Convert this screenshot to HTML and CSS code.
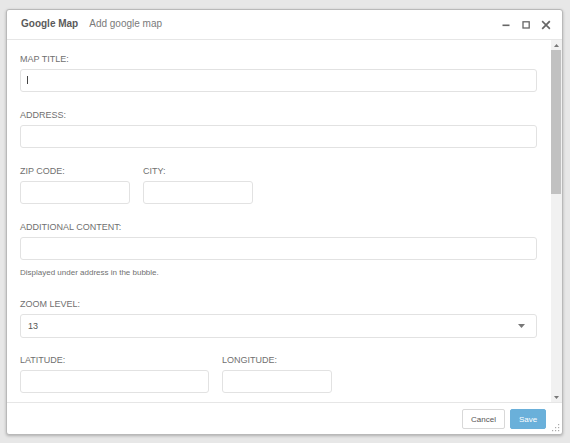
FILE: index.html
```html
<!DOCTYPE html>
<html>
<head>
<meta charset="utf-8">
<link rel="stylesheet" href="styles.css">
</head>
<body>
<div class="dialog">
  <div class="header">
    <div class="title"><span class="title-main">Google Map</span><span class="title-sub">Add google map</span></div>
    <div class="controls">
      <svg class="ctl" viewBox="0 0 10 10" width="10" height="10"><rect x="1.5" y="4.5" width="7" height="1.6" fill="#666"/></svg>
      <svg class="ctl" viewBox="0 0 10 10" width="10" height="10"><rect x="2" y="1.8" width="6.2" height="6.2" fill="none" stroke="#666" stroke-width="1.3"/></svg>
      <svg class="ctl" viewBox="0 0 10 10" width="10" height="10"><path d="M1.8 1.8 L8.2 8.2 M8.2 1.8 L1.8 8.2" stroke="#666" stroke-width="1.7" stroke-linecap="square"/></svg>
    </div>
  </div>
  <div class="body">
    <div class="form">
      <div class="group">
        <div class="label">MAP TITLE:</div>
        <div class="caret-wrap"><input class="input full" type="text"><span class="caret"></span></div>
      </div>
      <div class="group">
        <div class="label">ADDRESS:</div>
        <input class="input full" type="text">
      </div>
      <div class="row">
        <div class="group w110">
          <div class="label">ZIP CODE:</div>
          <input class="input full" type="text">
        </div>
        <div class="group w110">
          <div class="label">CITY:</div>
          <input class="input full" type="text">
        </div>
      </div>
      <div class="group with-help">
        <div class="label">ADDITIONAL CONTENT:</div>
        <input class="input full" type="text">
        <div class="help">Displayed under address in the bubble.</div>
      </div>
      <div class="group zoom">
        <div class="label">ZOOM LEVEL:</div>
        <div class="select"><span>13</span><svg width="7" height="4" viewBox="0 0 7 4"><path d="M0 0 L7 0 L3.5 4 Z" fill="#777"/></svg></div>
      </div>
      <div class="row">
        <div class="group w189">
          <div class="label">LATITUDE:</div>
          <input class="input full" type="text">
        </div>
        <div class="group w110">
          <div class="label">LONGITUDE:</div>
          <input class="input full" type="text">
        </div>
      </div>
    </div>
    <div class="scrollbar">
      <div class="arrow"><svg width="5" height="3" viewBox="0 0 5 3"><path d="M0 3 L5 3 L2.5 0 Z" fill="#777"/></svg></div>
      <div class="thumb"></div>
      <div class="track"></div>
      <div class="arrow"><svg width="5" height="3" viewBox="0 0 5 3"><path d="M0 0 L5 0 L2.5 3 Z" fill="#777"/></svg></div>
    </div>
  </div>
  <div class="footer">
    <button class="btn cancel">Cancel</button>
    <button class="btn save">Save</button>
  </div>
  <svg class="grip" width="8" height="8" viewBox="0 0 8 8">
    <rect x="6" y="0" width="1.2" height="1.2" fill="#aaa"/>
    <rect x="3" y="3" width="1.2" height="1.2" fill="#aaa"/>
    <rect x="6" y="3" width="1.2" height="1.2" fill="#aaa"/>
    <rect x="0" y="6" width="1.2" height="1.2" fill="#aaa"/>
    <rect x="3" y="6" width="1.2" height="1.2" fill="#aaa"/>
    <rect x="6" y="6" width="1.2" height="1.2" fill="#aaa"/>
  </svg>
</div>
</body>
</html>
```
FILE: styles.css
```css
html, body {
  margin: 0;
  padding: 0;
}
body {
  background: #e7e7e7;
  padding: 9px 0 0 6px;
  font-family: "Liberation Sans", Arial, sans-serif;
  height: 443px;
  box-sizing: border-box;
  overflow: hidden;
}
.dialog {
  position: relative;
  width: 557px;
  height: 426px;
  box-sizing: border-box;
  border: 1px solid #b9b9b9;
  border-radius: 3px;
  background: #fff;
  box-shadow: 0 1px 3px rgba(0,0,0,0.25);
  display: flex;
  flex-direction: column;
}
.header {
  height: 28px;
  padding: 0 11px 1px 14px;
  border-bottom: 1px solid #e6e6e6;
  display: flex;
  align-items: center;
  justify-content: space-between;
  flex: none;
}
.title {
  font-size: 10px;
  line-height: 28px;
}
.title-main {
  font-weight: bold;
  color: #5a5a5a;
}
.title-sub {
  color: #7a7a7a;
  margin-left: 11px;
}
.controls {
  display: flex;
  gap: 10px;
  align-items: center;
  margin-top: 2px;
}
.ctl {
  display: block;
}
.body {
  flex: 1;
  display: flex;
  min-height: 0;
  overflow: hidden;
}
.form {
  flex: 1;
  padding: 14px 14px 0 13px;
  overflow: hidden;
}
.group {
  margin-bottom: 18px;
}
.group.with-help {
  margin-bottom: 21px;
}
.group.zoom {
  margin-bottom: 17px;
}
.row {
  display: flex;
  gap: 13px;
}
.w110 { width: 110px; }
.w189 { width: 189px; }
.label {
  font-size: 9px;
  line-height: 11px;
  color: #707070;
  margin-bottom: 4px;
}
.input {
  display: block;
  box-sizing: border-box;
  height: 23px;
  border: 1px solid #e2e2e2;
  border-radius: 3px;
  background: #fff;
  margin: 0;
  padding: 0 6px;
  outline: none;
}
.full { width: 100%; }
.caret-wrap {
  position: relative;
}
.caret {
  position: absolute;
  left: 7px;
  top: 7px;
  width: 1px;
  height: 8px;
  background: #444;
}
.help {
  font-size: 8px;
  line-height: 11px;
  color: #707070;
  margin-top: 7px;
}
.select {
  box-sizing: border-box;
  height: 24px;
  border: 1px solid #e2e2e2;
  border-radius: 3px;
  padding: 0 11px 0 7px;
  display: flex;
  align-items: center;
  justify-content: space-between;
  font-size: 9px;
  color: #555;
}
.scrollbar {
  width: 11px;
  flex: none;
  background: #f1f1f1;
  display: flex;
  flex-direction: column;
}
.arrow {
  height: 10px;
  display: flex;
  align-items: center;
  justify-content: center;
}
.thumb {
  height: 144px;
  background: #c1c1c1;
  margin-right: 1px;
}
.track {
  flex: 1;
}
.footer {
  flex: none;
  height: 25px;
  border-top: 1px solid #e6e6e6;
  display: flex;
  justify-content: flex-end;
  align-items: flex-start;
  gap: 5px;
  padding: 6px 16px 0 0;
}
.btn {
  font-family: "Liberation Sans", Arial, sans-serif;
  font-size: 8px;
  height: 20px;
  border-radius: 2px;
  padding: 0;
  margin: 0;
  cursor: pointer;
}
.cancel {
  width: 43px;
  background: #fff;
  border: 1px solid #d8d8d8;
  color: #555;
}
.save {
  width: 36px;
  background: #6ab0da;
  border: 1px solid #6ab0da;
  color: #fff;
}
.grip {
  position: absolute;
  right: 2px;
  bottom: 2px;
}
```
